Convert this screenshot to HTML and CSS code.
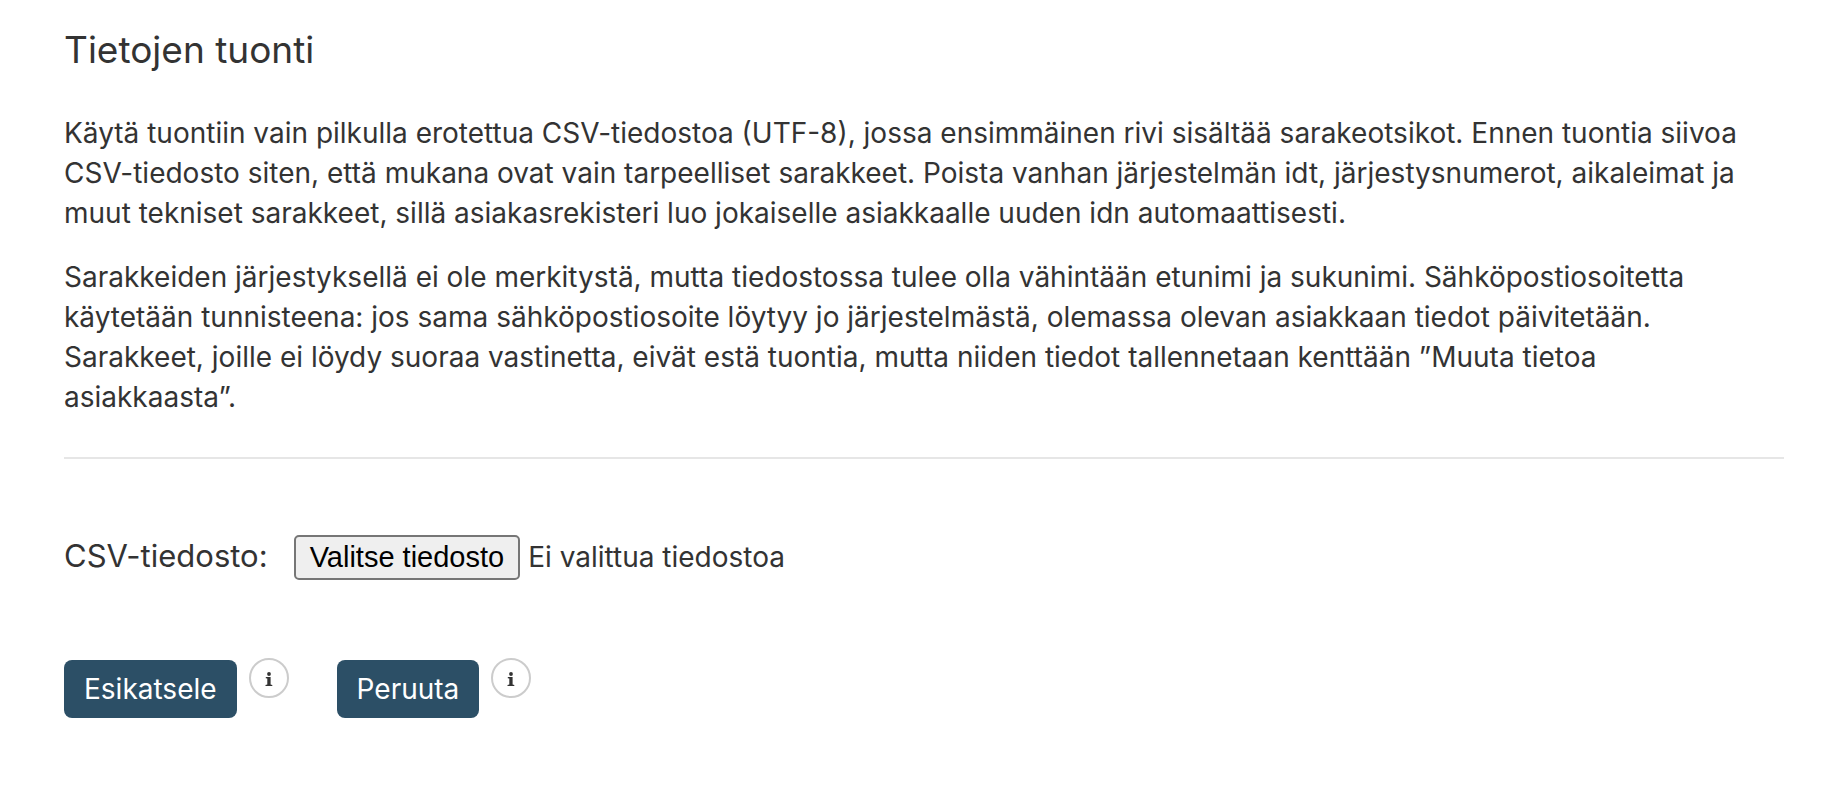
FILE: index.html
```
<!DOCTYPE html>
<html lang="fi">
<head>
  <meta charset="UTF-8">
  <meta name="viewport" content="width=device-width, initial-scale=1.0">
  <title>Tietojen tuonti</title>
  <link rel="stylesheet" href="styles.css">
</head>
<body>
  <main class="container">
    <h1>Tietojen tuonti</h1>
    <div class="intro">
      <p>Käytä tuontiin vain pilkulla erotettua CSV-tiedostoa (UTF-8), jossa ensimmäinen rivi sisältää sarakeotsikot. Ennen tuontia siivoa CSV-tiedosto siten, että mukana ovat vain tarpeelliset sarakkeet. Poista vanhan järjestelmän idt, järjestysnumerot, aikaleimat ja muut tekniset sarakkeet, sillä asiakasrekisteri luo jokaiselle asiakkaalle uuden idn automaattisesti.</p>
      <p>Sarakkeiden järjestyksellä ei ole merkitystä, mutta tiedostossa tulee olla vähintään etunimi ja sukunimi. Sähköpostiosoitetta käytetään tunnisteena: jos sama sähköpostiosoite löytyy jo järjestelmästä, olemassa olevan asiakkaan tiedot päivitetään. Sarakkeet, joille ei löydy suoraa vastinetta, eivät estä tuontia, mutta niiden tiedot tallennetaan kenttään ”Muuta tietoa asiakkaasta”.</p>
    </div>
    <form>
      <div class="file-row">
        <label for="csvFile">CSV-tiedosto:</label>
        <div class="file-picker">
          <input type="file" id="csvFile" accept=".csv" hidden onchange="showFileName()">
          <button type="button" class="file-button" onclick="document.getElementById('csvFile').click()">Valitse tiedosto</button>
          <span id="fileName">Ei valittua tiedostoa</span>
        </div>
      </div>
      <div class="actions">
        <div class="action">
          <button type="submit" class="btn">Esikatsele</button>
          <button type="button" class="info" aria-label="Tietoa esikatselusta">
            <svg viewBox="0 0 8 14" width="8" height="14"><circle cx="4" cy="2" r="1.9"/><path d="M.8 5h4.8v7.4l1.7.5V14H.5v-1.1l1.8-.5V6.6L.8 6.2z"/></svg>
          </button>
        </div>
        <div class="action">
          <button type="button" class="btn">Peruuta</button>
          <button type="button" class="info" aria-label="Tietoa peruutuksesta">
            <svg viewBox="0 0 8 14" width="8" height="14"><circle cx="4" cy="2" r="1.9"/><path d="M.8 5h4.8v7.4l1.7.5V14H.5v-1.1l1.8-.5V6.6L.8 6.2z"/></svg>
          </button>
        </div>
      </div>
    </form>
  </main>

  <script>
    // Show the name of the chosen file next to the button
    function showFileName() {
      const file = document.getElementById('csvFile').files[0];
      document.getElementById('fileName').textContent = file ? file.name : 'Ei valittua tiedostoa';
    }
  </script>
</body>
</html>
```
FILE: styles.css
```
* {
  box-sizing: border-box;
}

body {
  margin: 0;
  background: #ffffff;
  color: #333333;
  font-family: Inter, "Liberation Sans", sans-serif;
  font-size: 28px;
  line-height: 40px;
}

.container {
  padding: 24px 54px 64px 64px;
}

h1 {
  margin: 0 0 37px;
  font-size: 37px;
  font-weight: 400;
  line-height: 52px;
}

/* Instructions */
.intro {
  padding-bottom: 40px;
  border-bottom: 2px solid #e6e6e6;
}

.intro p {
  margin: 0 0 24px;
  padding-right: 32px;
}

.intro p:last-child {
  margin-bottom: 0;
}

/* File picker */
.file-row {
  display: flex;
  align-items: baseline;
  gap: 26px;
  margin-top: 76px;
}

.file-row label {
  font-size: 31px;
}

.file-picker {
  display: flex;
  align-items: baseline;
  gap: 8px;
}

.file-button {
  height: 45px;
  padding: 0 14px;
  border: 2px solid #767676;
  border-radius: 5px;
  background: #efefef;
  color: #000000;
  font-family: "Liberation Sans", Arial, sans-serif;
  font-size: 29px;
}

/* Buttons */
.actions {
  display: flex;
  gap: 48px;
  margin-top: 78px;
}

.action {
  display: flex;
  align-items: flex-start;
  gap: 12px;
}

.btn {
  height: 58px;
  margin-top: 2px;
  padding: 0 20px;
  border: none;
  border-radius: 8px;
  background: #2c4f66;
  color: #ffffff;
  font-family: inherit;
  font-size: 28px;
  cursor: pointer;
}

.info {
  display: flex;
  align-items: center;
  justify-content: center;
  width: 40px;
  height: 40px;
  padding: 2px 0 0;
  border: 2px solid #cccccc;
  border-radius: 50%;
  background: #ffffff;
  cursor: pointer;
}

.info svg {
  fill: #333333;
}
```
